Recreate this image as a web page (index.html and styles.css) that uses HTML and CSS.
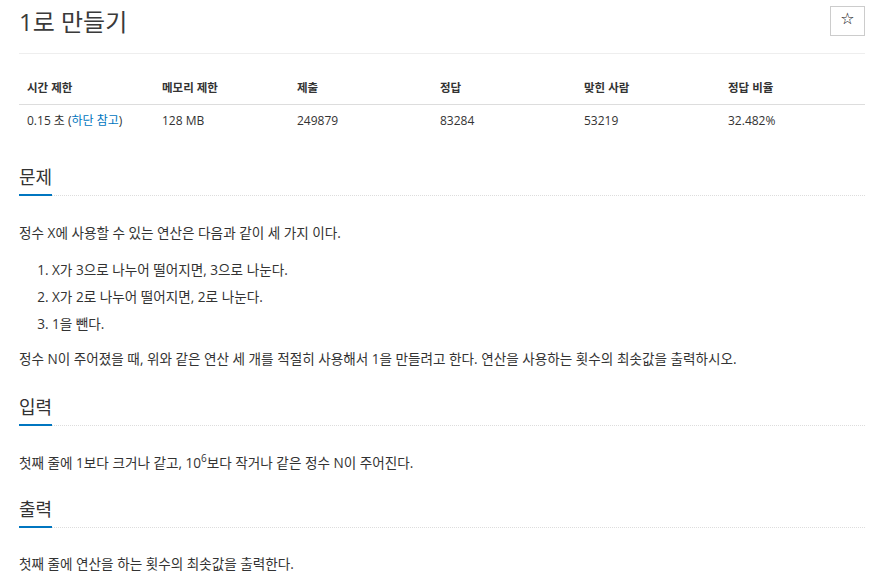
FILE: index.html
```html
<!DOCTYPE html>
<html lang="ko">
<head>
<meta charset="utf-8">
<link rel="stylesheet" href="styles.css">
</head>
<body>
<div class="page">
  <div class="title-row">
    <h1 class="title">1로 만들기</h1>
    <button class="star-btn" type="button">☆</button>
  </div>

  <table class="info">
    <thead>
      <tr>
        <th class="c1">시간 제한</th>
        <th class="c2">메모리 제한</th>
        <th class="c3">제출</th>
        <th class="c4">정답</th>
        <th class="c5">맞힌 사람</th>
        <th class="c6">정답 비율</th>
      </tr>
    </thead>
    <tbody>
      <tr>
        <td>0.15 초 (<a href="#" class="link">하단 참고</a>)</td>
        <td>128 MB</td>
        <td>249879</td>
        <td>83284</td>
        <td>53219</td>
        <td>32.482%</td>
      </tr>
    </tbody>
  </table>

  <section class="section first">
    <div class="headline"><h2>문제</h2></div>
    <p class="text">정수 X에 사용할 수 있는 연산은 다음과 같이 세 가지 이다.</p>
    <ol class="steps">
      <li>X가 3으로 나누어 떨어지면, 3으로 나눈다.</li>
      <li>X가 2로 나누어 떨어지면, 2로 나눈다.</li>
      <li>1을 뺀다.</li>
    </ol>
    <p class="text">정수 N이 주어졌을 때, 위와 같은 연산 세 개를 적절히 사용해서 1을 만들려고 한다. 연산을 사용하는 횟수의 최솟값을 출력하시오.</p>
  </section>

  <section class="section">
    <div class="headline"><h2>입력</h2></div>
    <p class="text">첫째 줄에 1보다 크거나 같고, 10<sup>6</sup>보다 작거나 같은 정수 N이 주어진다.</p>
  </section>

  <section class="section last">
    <div class="headline"><h2>출력</h2></div>
    <p class="text tight">첫째 줄에 연산을 하는 횟수의 최솟값을 출력한다.</p>
  </section>
</div>
</body>
</html>
```

FILE: styles.css
```css
* { box-sizing: border-box; }
html, body { margin: 0; padding: 0; background: #fff; }
body {
  font-family: "Open Sans", "Noto Sans CJK KR", sans-serif;
  color: #333;
  font-size: 13.6px;
}
.page {
  padding: 0 21px 0 19px;
}
.title-row {
  display: flex;
  justify-content: space-between;
  align-items: flex-start;
  padding-top: 6px;
  height: 54px;
  border-bottom: 1px solid #eee;
}
.title {
  margin: 0;
  font-size: 24px;
  font-weight: 400;
  line-height: 32px;
  color: #3a3a3a;
}
.star-btn {
  width: 35px;
  height: 30px;
  border: 1px solid #ccc;
  background: #fff;
  color: #111;
  font-size: 16px;
  line-height: 1;
  padding: 0 0 4px;
  font-family: "DejaVu Sans", sans-serif;
  cursor: pointer;
}
.info {
  width: 100%;
  border-collapse: collapse;
  table-layout: fixed;
  margin-top: 17px;
}
.info th {
  text-align: left;
  font-weight: 700;
  font-size: 11.5px;
  line-height: 20px;
  padding: 7px 8px 6px;
  border-bottom: 1px solid #ddd;
  color: #333;
}
.info td {
  font-size: 12px;
  line-height: 20px;
  padding: 6px 8px;
  color: #333;
}
.c1 { width: 135px; }
.c2 { width: 135px; }
.c3 { width: 143px; }
.c4 { width: 144px; }
.c5 { width: 144px; }
.c6 { width: 145px; }
.link { color: #0076c0; text-decoration: none; }

.section { margin-top: 22px; }
.section.first { margin-top: 25px; }
.section.last { margin-top: 20px; }
.headline {
  border-bottom: 1px dotted #ddd;
}
.headline h2 {
  display: inline-block;
  margin: 0 0 -1px;
  font-size: 18px;
  font-weight: 400;
  line-height: 30px;
  padding-bottom: 2px;
  border-bottom: 2px solid #0076c0;
  color: #333;
}
.text {
  margin: 26px 0 0;
  font-size: 13.6px;
  line-height: 22px;
}
.text.tight { margin-top: 25px; }
.steps {
  margin: 12px 0 0;
  padding-left: 33px;
  font-size: 13.6px;
}
.steps li {
  line-height: 27px;
}
.steps + .text { margin-top: 11px; }
sup { font-size: 10px; line-height: 0; vertical-align: 6px; }
```
